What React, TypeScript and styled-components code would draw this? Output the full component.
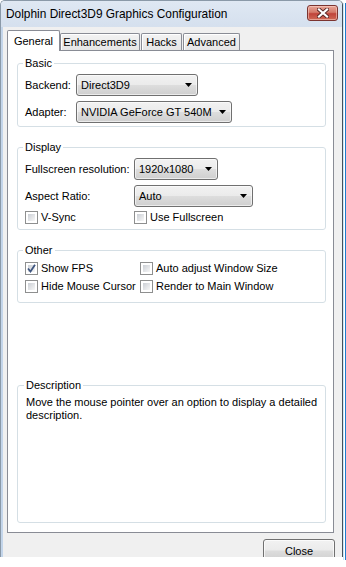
import React from 'react';
import styled, { createGlobalStyle } from 'styled-components';

const GlobalStyle = createGlobalStyle`
  html, body {
    margin: 0;
    padding: 0;
    background: #ffffff;
  }
  body {
    font-family: 'Liberation Sans', Arial, sans-serif;
    font-size: 11px;
    color: #000000;
  }
`;

const Page = styled.div`
  width: 346px;
  height: 567px;
  display: flex;
  align-items: flex-start;
  background: #ffffff;
  overflow: hidden;
`;

const Window = styled.div`
  width: 343px;
  height: 557px;
  flex: none;
  box-sizing: border-box;
  display: flex;
  flex-direction: column;
  border-top: 1px solid #8a99a8;
  border-left: 1px solid #8a99a8;
  border-right: 1px solid #44505c;
  border-radius: 5px 5px 0 0;
  overflow: hidden;
  background: #f0f0f0;
`;

const Backdrop = styled.div`
  width: 3px;
  height: 557px;
  flex: none;
  box-sizing: border-box;
  margin-top: 3px;
  border-left: 1px solid #c9e6f7;
  border-right: 1px solid #1a7fd0;
`;

const TitleBar = styled.div`
  height: 26px;
  flex: none;
  display: flex;
  align-items: flex-start;
  justify-content: space-between;
  padding: 0 4px 0 5px;
  background: linear-gradient(#dfe8f3, #d5e0ee);
`;

const Title = styled.span`
  margin-top: 6px;
  font-size: 11.9px;
  line-height: 14px;
  color: #000000;
`;

const CloseBox = styled.div`
  width: 31px;
  height: 16px;
  margin-top: 4px;
  box-sizing: border-box;
  display: flex;
  align-items: center;
  justify-content: center;
  border: 1px solid #7b3430;
  border-radius: 3px;
  background: linear-gradient(#e8a597 0%, #d47a6a 45%, #c0443a 55%, #cf6a56 100%);
  box-shadow: inset 0 0 0 1px rgba(255, 220, 210, 0.5);
`;

const Body = styled.div`
  flex: 1;
  display: flex;
  flex-direction: column;
  border-left: 2px solid #c3d5ea;
  padding: 3px 8px 0 4px;
  background: #f0f0f0;
`;

const TabRow = styled.div`
  height: 20px;
  flex: none;
  display: flex;
  align-items: flex-end;
`;

const Tab = styled.div<{ $active?: boolean; $w: number; $gap?: number }>`
  width: ${p => p.$w}px;
  height: ${p => (p.$active ? 21 : 17)}px;
  margin-left: ${p => p.$gap || 0}px;
  margin-bottom: ${p => (p.$active ? -1 : 0)}px;
  box-sizing: border-box;
  display: flex;
  align-items: center;
  justify-content: center;
  padding-bottom: ${p => (p.$active ? 1 : 0)}px;
  border: 1px solid #898c95;
  border-bottom: none;
  border-radius: 2px 2px 0 0;
  background: ${p => (p.$active ? '#ffffff' : 'linear-gradient(#f3f3f3, #e6e6e6)')};
  box-shadow: ${p => (p.$active ? 'none' : 'inset 1px 1px 0 #ffffff')};
  position: relative;
  z-index: ${p => (p.$active ? 1 : 0)};
  font-size: 11px;
`;

const Panel = styled.div`
  height: 483px;
  flex: none;
  box-sizing: border-box;
  display: flex;
  flex-direction: column;
  gap: 14px;
  padding: 6px 7px 9px 9px;
  border: 1px solid #898c95;
  background: #ffffff;
`;

const Group = styled.fieldset<{ $pad?: string; $grow?: boolean }>`
  margin: 0;
  min-width: 0;
  padding: ${p => p.$pad || '4px 6px 3px 7px'};
  border: 1px solid #d5dfe5;
  border-radius: 3px;
  ${p => (p.$grow ? 'margin-top: auto; height: 144px; box-sizing: border-box;' : '')}
`;

const Legend = styled.legend`
  margin-left: -2px;
  padding: 0 2px;
  line-height: 13px;
  font-size: 11px;
  color: #000000;
`;

const FormGrid = styled.div<{ $label: number }>`
  display: grid;
  grid-template-columns: ${p => p.$label}px auto;
  row-gap: 5px;
  align-items: center;
  justify-items: start;
`;

const Label = styled.span`
  line-height: 14px;
`;

const Combo = styled.div<{ $w: number }>`
  width: ${p => p.$w}px;
  height: 22px;
  box-sizing: border-box;
  display: flex;
  align-items: center;
  justify-content: space-between;
  padding: 0 5px 0 4px;
  border: 1px solid #707070;
  border-radius: 3px;
  background: linear-gradient(#f2f2f2 0%, #ebebeb 48%, #dddddd 52%, #cfcfcf 100%);
  box-shadow: inset 0 0 0 1px rgba(255, 255, 255, 0.6);
`;

const CheckRow = styled.div<{ $col: number }>`
  display: grid;
  grid-template-columns: ${p => p.$col}px auto;
  row-gap: 4px;
  align-items: center;
  justify-items: start;
  margin-top: ${p => (p.$col === 109 ? 3 : 0)}px;
`;

const CheckLabel = styled.label`
  display: flex;
  align-items: center;
  gap: 3px;
  line-height: 14px;
  white-space: nowrap;
`;

const Box = styled.span`
  width: 13px;
  height: 13px;
  flex: none;
  box-sizing: border-box;
  display: flex;
  align-items: center;
  justify-content: center;
  padding: 2px;
  border: 1px solid #8e8f8f;
  background: linear-gradient(135deg, #cbcfd5, #f7f7f7) content-box, #ffffff;
`;

const Description = styled.p`
  margin: 0;
  line-height: 13px;
`;

const Footer = styled.div`
  display: flex;
  justify-content: flex-end;
  padding-top: 6px;
  margin-right: -1px;
`;

const Button = styled.div`
  width: 72px;
  height: 23px;
  flex: none;
  box-sizing: border-box;
  display: flex;
  align-items: center;
  justify-content: center;
  border: 1px solid #707070;
  border-radius: 3px;
  background: linear-gradient(#f2f2f2 0%, #ebebeb 48%, #dddddd 52%, #cfcfcf 100%);
  box-shadow: inset 0 0 0 1px rgba(255, 255, 255, 0.7);
  font-size: 11px;
`;

const Arrow = () => (
  <svg width="7" height="4" viewBox="0 0 7 4">
    <path d="M0 0 H7 L3.5 4 Z" fill="#000000" />
  </svg>
);

const Select = ({ value, width }: { value: string; width: number }) => (
  <Combo $w={width}>
    <span>{value}</span>
    <Arrow />
  </Combo>
);

const Check = ({ label, checked }: { label: string; checked?: boolean }) => (
  <CheckLabel>
    <Box>
      {checked && (
        <svg width="9" height="9" viewBox="0 0 9 9" style={{ margin: -2 }}>
          <path d="M1 4.5 L3.5 7.5 L8 0.8" fill="none" stroke="#3f5680" strokeWidth="1.8" />
        </svg>
      )}
    </Box>
    {label}
  </CheckLabel>
);

export default function App() {
  return (
    <Page>
      <GlobalStyle />
      <Window>
        <TitleBar>
          <Title>Dolphin Direct3D9 Graphics Configuration</Title>
          <CloseBox>
            <svg width="12" height="10" viewBox="0 0 12 10">
              <path d="M2 1.5 L10 8.5 M10 1.5 L2 8.5" stroke="#5a2a28" strokeWidth="4" strokeLinecap="square" />
              <path d="M2 1.5 L10 8.5 M10 1.5 L2 8.5" stroke="#ffffff" strokeWidth="2.2" strokeLinecap="square" />
            </svg>
          </CloseBox>
        </TitleBar>
        <Body>
          <TabRow>
            <Tab $active $w={53}>General</Tab>
            <Tab $w={80}>Enhancements</Tab>
            <Tab $w={41} $gap={1}>Hacks</Tab>
            <Tab $w={57} $gap={1}>Advanced</Tab>
          </TabRow>
          <Panel>
            <Group>
              <Legend>Basic</Legend>
              <FormGrid $label={51}>
                <Label>Backend:</Label>
                <Select value="Direct3D9" width={122} />
                <Label>Adapter:</Label>
                <Select value="NVIDIA GeForce GT 540M" width={156} />
              </FormGrid>
            </Group>
            <Group $pad="4px 6px 5px 7px">
              <Legend>Display</Legend>
              <FormGrid $label={109}>
                <Label>Fullscreen resolution:</Label>
                <Select value="1920x1080" width={84} />
                <Label>Aspect Ratio:</Label>
                <Select value="Auto" width={119} />
              </FormGrid>
              <CheckRow $col={109}>
                <Check label="V-Sync" />
                <Check label="Use Fullscreen" />
              </CheckRow>
            </Group>
            <Group $pad="4px 6px 9px 7px">
              <Legend>Other</Legend>
              <CheckRow $col={115}>
                <Check label="Show FPS" checked />
                <Check label="Auto adjust Window Size" />
                <Check label="Hide Mouse Cursor" />
                <Check label="Render to Main Window" />
              </CheckRow>
            </Group>
            <Group $grow $pad="4px 6px 8px 8px">
              <Legend>Description</Legend>
              <Description>
                Move the mouse pointer over an option to display a detailed description.
              </Description>
            </Group>
          </Panel>
          <Footer>
            <Button>Close</Button>
          </Footer>
        </Body>
      </Window>
      <Backdrop />
    </Page>
  );
}
